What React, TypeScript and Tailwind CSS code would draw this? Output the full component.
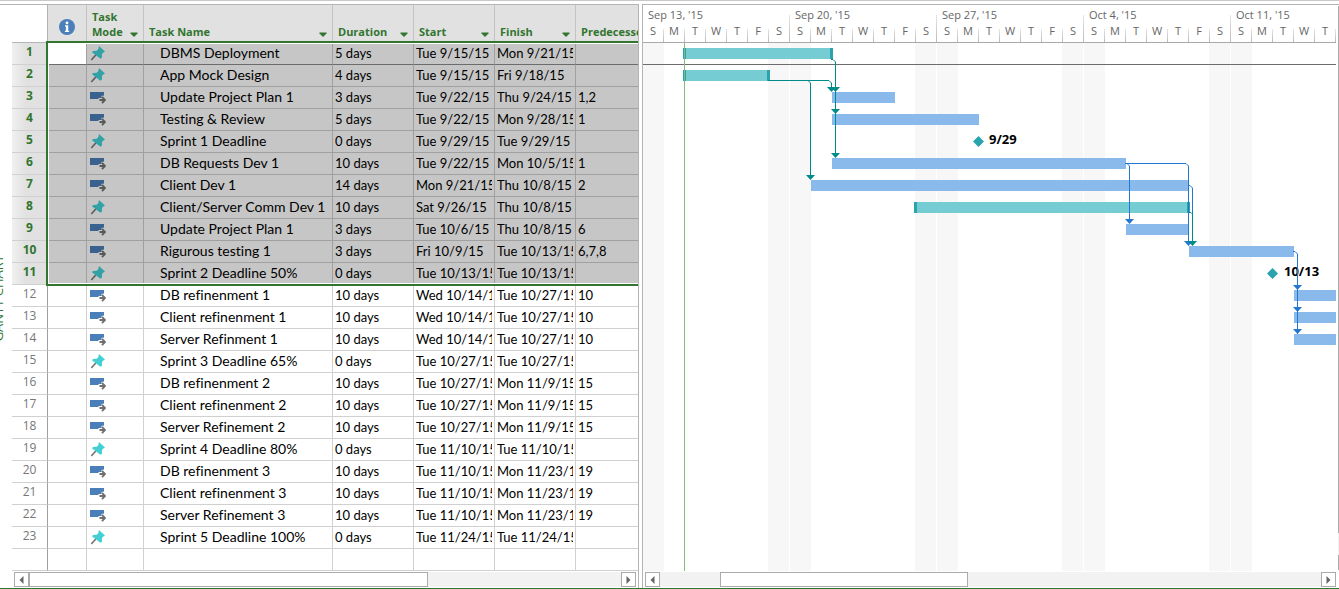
import React from "react";

type Mode = "pin" | "auto";
type Task = [Mode, string, string, string, string, string];

const tasks: Task[] = [
  ["pin", "DBMS Deployment", "5 days", "Tue 9/15/15", "Mon 9/21/15", ""],
  ["pin", "App Mock Design", "4 days", "Tue 9/15/15", "Fri 9/18/15", ""],
  ["auto", "Update Project Plan 1", "3 days", "Tue 9/22/15", "Thu 9/24/15", "1,2"],
  ["auto", "Testing & Review", "5 days", "Tue 9/22/15", "Mon 9/28/15", "1"],
  ["pin", "Sprint 1 Deadline", "0 days", "Tue 9/29/15", "Tue 9/29/15", ""],
  ["auto", "DB Requests Dev 1", "10 days", "Tue 9/22/15", "Mon 10/5/15", "1"],
  ["auto", "Client Dev 1", "14 days", "Mon 9/21/15", "Thu 10/8/15", "2"],
  ["pin", "Client/Server Comm Dev 1", "10 days", "Sat 9/26/15", "Thu 10/8/15", ""],
  ["auto", "Update Project Plan 1", "3 days", "Tue 10/6/15", "Thu 10/8/15", "6"],
  ["auto", "Rigurous testing 1", "3 days", "Fri 10/9/15", "Tue 10/13/15", "6,7,8"],
  ["pin", "Sprint 2 Deadline 50%", "0 days", "Tue 10/13/15", "Tue 10/13/15", ""],
  ["auto", "DB refinenment 1", "10 days", "Wed 10/14/15", "Tue 10/27/15", "10"],
  ["auto", "Client refinenment 1", "10 days", "Wed 10/14/15", "Tue 10/27/15", "10"],
  ["auto", "Server Refinment 1", "10 days", "Wed 10/14/15", "Tue 10/27/15", "10"],
  ["pin", "Sprint 3 Deadline 65%", "0 days", "Tue 10/27/15", "Tue 10/27/15", ""],
  ["auto", "DB refinenment 2", "10 days", "Tue 10/27/15", "Mon 11/9/15", "15"],
  ["auto", "Client refinenment 2", "10 days", "Tue 10/27/15", "Mon 11/9/15", "15"],
  ["auto", "Server Refinement 2", "10 days", "Tue 10/27/15", "Mon 11/9/15", "15"],
  ["pin", "Sprint 4 Deadline 80%", "0 days", "Tue 11/10/15", "Tue 11/10/15", ""],
  ["auto", "DB refinenment 3", "10 days", "Tue 11/10/15", "Mon 11/23/15", "19"],
  ["auto", "Client refinenment 3", "10 days", "Tue 11/10/15", "Mon 11/23/15", "19"],
  ["auto", "Server Refinement 3", "10 days", "Tue 11/10/15", "Mon 11/23/15", "19"],
  ["pin", "Sprint 5 Deadline 100%", "0 days", "Tue 11/24/15", "Tue 11/24/15", ""],
];

const SELECTED = 11;
const ROW = 22;
const weeks = ["Sep 13, '15", "Sep 20, '15", "Sep 27, '15", "Oct 4, '15", "Oct 11, '15", "Oct 18, '15", "Oct 25, '15"];
const days = ["S", "M", "T", "W", "T", "F", "S"];

function InfoIcon() {
  return (
    <svg width="16" height="16" viewBox="0 0 16 16" aria-label="Indicators" role="img">
      <circle cx="8" cy="8" r="8" fill="#4a7fb9" />
      <circle cx="8" cy="3.9" r="1.4" fill="#fff" />
      <path d="M6 6.2h3.200v5.600h1V13H5.900v-1.200h1V7.400H6z" fill="#fff" />
    </svg>
  );
}

function ModeIcon({ mode, dim }: { mode: Mode; dim: boolean }) {
  if (mode === "pin") {
    return (
      <svg width="16" height="16" viewBox="0 0 16 16" className="block" role="img" aria-label="Manually scheduled">
        <path d="M6 8.800L1.300 14" stroke={dim ? "#5f5f5f" : "#777"} strokeWidth="1.700" />
        <path d="M9 0l6 5.500-2.400 1.400-.6 1.600v3l-1.600 1.200L2 6.200l1-1.200 3.600-.2 1.600-1.600z" fill={dim ? "#33a2a6" : "#42d0d4"} />
      </svg>
    );
  }
  return (
    <svg width="16" height="16" viewBox="0 0 16 16" className="block" role="img" aria-label="Auto scheduled">
      <path d="M0 2h14v7H0z" fill={dim ? "#3a628f" : "#4a7fb9"} />
      <path d="M8.500 8h3V6l2-.5L17 10l-4 4-2-2H8.500z" fill={dim ? "#c6c6c6" : "#fff"} />
      <path d="M9.500 10h5M12 6.900l3 3.100-3 3.100" stroke={dim ? "#595959" : "#6f6f6f"} strokeWidth="1.900" fill="none" />
    </svg>
  );
}

function Head({ label, arrow = true }: { label: string; arrow?: boolean }) {
  return (
    <th className="h-9 border-r border-[#c3c3c3] p-0 text-left align-bottom last:border-r-0">
      <button className="flex w-full items-end justify-between pr-[5px] pb-1 pl-[5px] text-left text-[11px] leading-[15px] font-bold text-[#31752f]">
        <span>{label}</span>
        {arrow && (
          <svg width="8" height="8" viewBox="0 0 8 8" className="shrink-0" aria-hidden="true">
            <path d="M0.500 1.500h7v1L4 6 0.500 2.500z" fill="#31752f" />
          </svg>
        )}
      </button>
    </th>
  );
}

function TaskTable() {
  return (
    <div className="relative w-[626px] shrink-0 overflow-hidden">
      <table className="w-[680px] table-fixed border-separate border-spacing-0 font-['Lato',sans-serif] text-[13px] leading-[21px] text-black [font-variant-ligatures:none]">
        <colgroup>
          <col className="w-9" />
          <col className="w-[39px]" />
          <col className="w-[57px]" />
          <col className="w-[189px]" />
          <col className="w-[81px]" />
          <col className="w-[81px]" />
          <col className="w-[81px]" />
          <col />
        </colgroup>
        <thead className="bg-[#e1e1e1] font-['Open_Sans',sans-serif]">
          <tr className="h-[38px]">
            <th className="border-r border-b border-[#b4b4b4] bg-white p-0" aria-label="Row" />
            <th className="border-r border-[#c3c3c3] p-0 pt-1.5">
              <span className="flex justify-center">
                <InfoIcon />
              </span>
            </th>
            <Head label="Task Mode" />
            <Head label="Task Name" />
            <Head label="Duration" />
            <Head label="Start" />
            <Head label="Finish" />
            <Head label="Predecessors" arrow={false} />
          </tr>
        </thead>
        <tbody>
          {[...tasks, null].map((task, i) => {
            const sel = i < SELECTED;
            const tone = sel ? (i === 0 ? "border-[#a0a0a0] border-b-[#6c6c6c] bg-[#c6c6c6]" : "border-[#a0a0a0] bg-[#c6c6c6]") : "border-[#d0d0d0]";
            const cell = "overflow-hidden whitespace-nowrap border-r border-b p-0 pl-0.5 " + tone;
            return (
              <tr key={i} className="h-[22px]">
                <th
                  className={
                    "border-r border-b border-r-[#a0a0a0] border-b-[#d0d0d0] p-0 pb-1 text-center font-['Open_Sans',sans-serif] text-[12px] leading-[17px] " +
                    (sel ? "bg-linear-to-r from-[#f0f0f0] to-[#e1e1e1] to-40% font-bold text-[#31752f]" : "font-normal text-[#777]")
                  }
                >
                  {task ? i + 1 : ""}
                </th>
                <td className={cell + (i === 0 ? " bg-white!" : "")} />
                <td className={cell + " pl-[3px]!"}>{task && <ModeIcon mode={task[0]} dim={sel} />}</td>
                <td className={cell + " pl-4! align-top text-[14px] leading-[19px]"}>{task?.[1]}</td>
                {[2, 3, 4, 5].map((c) => (
                  <td key={c} className={cell}>
                    <div className="mr-0.5 overflow-hidden">{task?.[c]}</div>
                  </td>
                ))}
              </tr>
            );
          })}
        </tbody>
      </table>
      <div className="pointer-events-none absolute top-9 -right-1 left-[34px] h-[245px] border-2 border-[#31752f] inset-shadow-[0_0_0_1px_#fff]" />
    </div>
  );
}

const BLUE = "#8abaeb";
const TEAL = "#75cdd3";
const LINK = "#2277cf";
const TLINK = "#008b8b";

/* Each bar: row, left, right, manually scheduled. */
const bars: [number, number, number, boolean][] = [
  [1, 40, 190, true],
  [2, 40, 127, true],
  [3, 189, 252, false],
  [4, 189, 336, false],
  [6, 189, 483, false],
  [7, 168, 546, false],
  [8, 271, 547, true],
  [9, 483, 546, false],
  [10, 546, 651, false],
  [12, 651, 945, false],
  [13, 651, 945, false],
  [14, 651, 945, false],
];

const arrows: [number, number, string][] = [
  [188, 3, TLINK],
  [192, 3, TLINK],
  [192, 4, TLINK],
  [192, 6, TLINK],
  [167, 7, TLINK],
  [486, 9, LINK],
  [545, 10, LINK],
  [549, 10, TLINK],
  [654, 12, LINK],
  [654, 13, LINK],
  [654, 14, LINK],
];

const links: [string, string][] = [
  ["M188 16.500h2l2.500 2.500v93", TLINK],
  ["M125 37.500h61l2.500 2.500v6M165 37.500l2.500 2.500v94", TLINK],
  ["M482 120.500h61l2.500 2.500v78M484 120.500l2.500 2.500v56", LINK],
  ["M546 142.500h1l2.500 2.500v26", LINK],
  ["M546 169.500h2l1.500 1.500v30", TLINK],
  ["M650 208.500h2l2.500 2.500v80", LINK],
];

function Chart() {
  return (
    <svg width="1029" height="528" viewBox="0 0 1029 528" className="block max-w-none" role="img" aria-label="Gantt chart">
      {weeks.map((w, i) => (
        <g key={w} fill="#f7f7f7">
          <rect x={i * 147} width="21" height="528" />
          <rect x={i * 147 + 125} width="21" height="528" />
        </g>
      ))}
      {bars.map(([row, a, b, manual]) => (
        <g key={row}>
          <rect x={a} y={row * ROW - 17} width={b - a} height="11" fill={manual ? TEAL : BLUE} />
          {manual && <path d={`M${a} ${row * ROW - 17}h3v11h-3zM${b - 3} ${row * ROW - 17}h3v11h-3z`} fill="#2aa3ad" />}
        </g>
      ))}
      <rect y="21" width="1029" height="1" fill="#6c6c6c" />
      <rect x="41" width="1" height="528" fill="#82bb7e" />
      <g fontFamily="'Open Sans', sans-serif" fontWeight="700" fontSize="13" fill="#000">
        <text x="346" y="101">9/29</text>
        <text x="641" y="233">10/13</text>
      </g>
      <path d="M335.500 93l5.500 5.500-5.500 5.500-5.500-5.500zM629.500 225l5.500 5.500-5.500 5.500-5.500-5.500z" fill="#2aa3ad" />
      {links.map(([d, c]) => (
        <path key={d} d={d} fill="none" stroke={c} />
      ))}
      {arrows.map(([x, row, c]) => (
        <path key={x + "-" + row} d={`M${x - 4} ${row * ROW - 22}h9l-4.500 5z`} fill={c} />
      ))}
    </svg>
  );
}

function Timeline() {
  return (
    <div className="flex h-[38px] w-[1029px] border-b border-[#a8a8a8] font-['Open_Sans',sans-serif] text-[11px] leading-4 text-[#666]">
      {weeks.map((w) => (
        <div key={w} className="relative w-[147px] shrink-0 pt-0.5">
          <div className="pl-[5px] whitespace-nowrap">{w}</div>
          <div className="flex">
            {days.map((d, j) => (
              <span key={j} className="relative w-[21px] pr-px text-center">
                {d}
                <i className={"absolute right-0 w-px bg-linear-to-b from-[#e6e6e6] to-[#bbb] " + (j === 6 ? "-top-2 h-[27px]" : "top-1.5 h-[13px]")} />
              </span>
            ))}
          </div>
        </div>
      ))}
    </div>
  );
}

function ScrollButton({ dir }: { dir: "left" | "right" }) {
  return (
    <button aria-label={"Scroll " + dir} className="grid w-[15px] shrink-0 place-items-center border border-[#ababab] bg-white">
      <svg width="5" height="8" viewBox="0 0 5 8">
        <path d={dir === "left" ? "M4.500 0v8L0.500 4z" : "M0.500 0v8l4-4z"} fill="#666" />
      </svg>
    </button>
  );
}

export default function App() {
  return (
    <div className="flex min-h-screen flex-col overflow-hidden border-t border-b border-t-[#c8c8c8] border-b-[#31752f] bg-white">
      <main className="mt-[3px] flex flex-1">
        <div className="relative w-3 shrink-0 overflow-hidden border-t border-[#b4b4b4]">
          <span className="absolute top-[250px] -left-2.5 rotate-180 font-['Open_Sans',sans-serif] text-[13px] leading-4 whitespace-nowrap text-[#31752f] [writing-mode:vertical-rl]">
            GANTT CHART
          </span>
        </div>
        <section className="flex shrink-0 flex-col border-t border-r border-[#b4b4b4]">
          <TaskTable />
          <div className="mt-px mr-0.5 ml-0.5 flex h-[15px] bg-[#f2f2f2]">
            <ScrollButton dir="left" />
            <div className="w-[399px] border border-[#ababab] bg-white" />
            <div className="flex-1" />
            <ScrollButton dir="right" />
          </div>
        </section>
        <section className="ml-[3px] flex min-w-0 flex-1 flex-col border-t border-l border-[#b4b4b4]">
          <div className="overflow-hidden">
            <Timeline />
            <Chart />
          </div>
          <div className="mt-px ml-0.5 flex h-[15px] bg-[#f2f2f2]">
            <ScrollButton dir="left" />
            <div className="w-[60px] shrink-0" />
            <div className="w-[248px] shrink border border-[#ababab] bg-white" />
            <div className="flex-1" />
            <ScrollButton dir="right" />
          </div>
        </section>
        <div className="flex w-[3px] shrink-0 flex-col border-t border-[#b4b4b4] pl-0.5">
          <div className="mt-px h-4 border-l border-[#ababab]" />
          <div className="h-[511px] border-t border-b border-l border-[#ababab]" />
          <div className="h-[22px] bg-[#f2f2f2]" />
          <div className="h-[15px] border-t border-b border-l border-[#ababab]" />
        </div>
      </main>
    </div>
  );
}
